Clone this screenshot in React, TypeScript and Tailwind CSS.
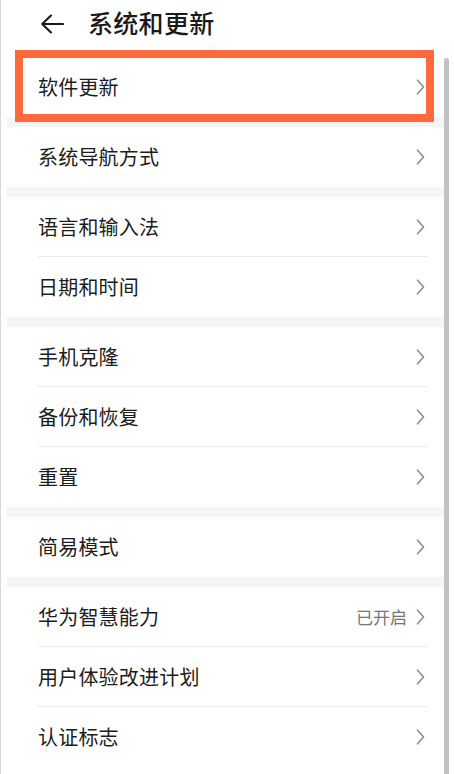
import React from "react";

const Chevron = () => (
  <svg width="9" height="16" viewBox="0 0 9 16" className="shrink-0">
    <path d="M1.5 1.2 L7.6 8 L1.5 14.8" fill="none" stroke="#8e8e8e" strokeWidth="1.6" strokeLinecap="round" strokeLinejoin="round" />
  </svg>
);

type Item = { label: string; value?: string };

const groups: Item[][] = [
  [{ label: "软件更新" }],
  [{ label: "系统导航方式" }],
  [{ label: "语言和输入法" }, { label: "日期和时间" }],
  [{ label: "手机克隆" }, { label: "备份和恢复" }, { label: "重置" }],
  [{ label: "简易模式" }],
  [{ label: "华为智慧能力", value: "已开启" }, { label: "用户体验改进计划" }, { label: "认证标志" }],
];

const Row = ({ item, last }: { item: Item; last: boolean }) => (
  <div className="pl-[31px]">
    <div
      className={
        "h-[60px] mr-[19px] pr-[2px] flex items-center justify-between " +
        (last ? "" : "border-b border-[#e8e8e8]")
      }
    >
      <span className="text-[20px] leading-none text-[#1c1c1c] tracking-[0.2px]">{item.label}</span>
      <div className="flex items-center gap-[9px]">
        {item.value && <span className="text-[17px] leading-none text-[#777777]">{item.value}</span>}
        <Chevron />
      </div>
    </div>
  </div>
);

export default function App() {
  return (
    <div
      className="relative w-[454px] h-[774px] overflow-hidden bg-white border-l border-[#d8d8d8]"
      style={{ fontFamily: '"Noto Sans CJK SC", "Noto Sans", sans-serif' }}
    >
      <div className="h-[57px] pb-[12px] flex items-center pl-[39px]">
        <svg width="24" height="20" viewBox="0 0 24 20" className="mt-[3px]">
          <path d="M11 1.5 L2.2 10 L11 18.5 M2.2 10 H23" fill="none" stroke="#1a1a1a" strokeWidth="2.1" strokeLinecap="round" strokeLinejoin="round" />
        </svg>
        <span className="ml-[24px] text-[25px] leading-none font-medium text-[#1a1a1a] tracking-[0.3px]">系统和更新</span>
      </div>
      <div className="ml-[6px] w-[439px]">
        {groups.map((g, gi) => (
          <div key={gi}>
            {gi > 0 && <div className="h-[10px] bg-[#f5f5f5]" />}
            {g.map((it, i) => (
              <Row key={it.label} item={it} last={i === g.length - 1} />
            ))}
          </div>
        ))}
      </div>
      <div className="absolute left-[443px] top-[58px] w-[5px] h-[730px] rounded-full bg-[#c2c2c2]" />
      <div className="absolute left-[14px] top-[50px] w-[419px] h-[72px] border-[8px] border-[#ff6a3c]" />
    </div>
  );
}
